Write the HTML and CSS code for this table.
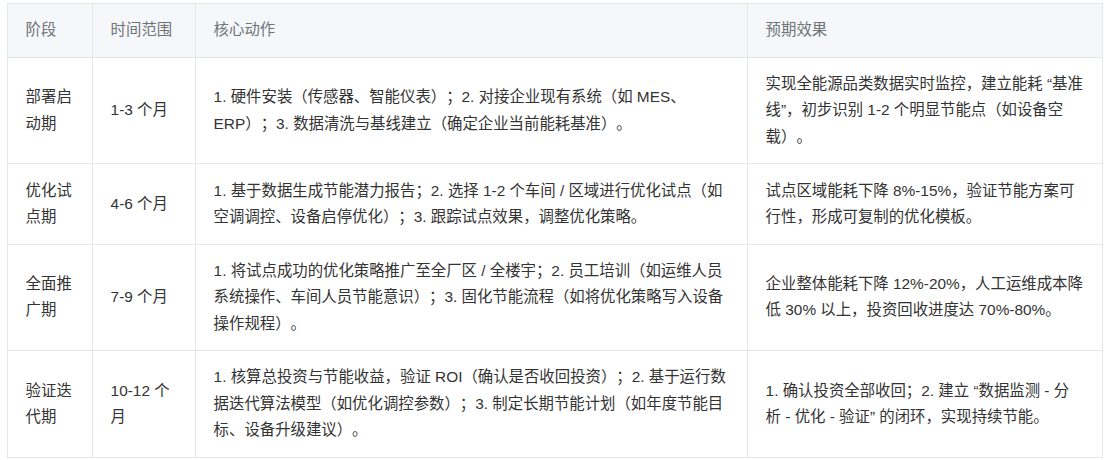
FILE: index.html
```html
<!DOCTYPE html>
<html lang="zh-CN">
<head>
<meta charset="utf-8">
<title>阶段规划</title>
<link rel="stylesheet" href="styles.css">
</head>
<body>
<div class="wrap">
<table class="plan">
<colgroup>
<col class="c1"><col class="c2"><col class="c3"><col class="c4">
</colgroup>
<thead>
<tr><th>阶段</th><th>时间范围</th><th>核心动作</th><th>预期效果</th></tr>
</thead>
<tbody>
<tr>
<td>部署启动期</td>
<td>1-3 个月</td>
<td>1. 硬件安装（传感器、智能仪表）；2. 对接企业现有系统（如 MES、ERP）；3. 数据清洗与基线建立（确定企业当前能耗基准）。</td>
<td>实现全能源品类数据实时监控，建立能耗 “基准线”，初步识别 1-2 个明显节能点（如设备空载）。</td>
</tr>
<tr>
<td>优化试点期</td>
<td>4-6 个月</td>
<td>1. 基于数据生成节能潜力报告；2. 选择 1-2 个车间 / 区域进行优化试点（如空调调控、设备启停优化）；3. 跟踪试点效果，调整优化策略。</td>
<td>试点区域能耗下降 8%-15%，验证节能方案可行性，形成可复制的优化模板。</td>
</tr>
<tr>
<td>全面推广期</td>
<td>7-9 个月</td>
<td>1. 将试点成功的优化策略推广至全厂区 / 全楼宇；2. 员工培训（如运维人员系统操作、车间人员节能意识）；3. 固化节能流程（如将优化策略写入设备操作规程）。</td>
<td>企业整体能耗下降 12%-20%，人工运维成本降低 30% 以上，投资回收进度达 70%-80%。</td>
</tr>
<tr>
<td>验证迭代期</td>
<td>10-12 个月</td>
<td>1. 核算总投资与节能收益，验证 ROI（确认是否收回投资）；2. 基于运行数据迭代算法模型（如优化调控参数）；3. 制定长期节能计划（如年度节能目标、设备升级建议）。</td>
<td>1. 确认投资全部收回；2. 建立 “数据监测 - 分析 - 优化 - 验证” 的闭环，实现持续节能。</td>
</tr>
</tbody>
</table>
</div>
</body>
</html>
```
FILE: styles.css
```css
html, body {
  margin: 0;
  padding: 0;
  background: #ffffff;
}
.wrap {
  padding: 3px 7px;
}
.plan {
  width: 1095px;
  table-layout: fixed;
  border-collapse: collapse;
  font-family: "Liberation Sans", "Noto Sans CJK SC", sans-serif;
  font-size: 15.4px;
  line-height: 26.4px;
  color: #333333;
  text-spacing-trim: space-all;
}
.c1 { width: 85px; }
.c2 { width: 103px; }
.c3 { width: 552px; }
.c4 { width: 355px; }
.plan th,
.plan td {
  border: 1px solid #e4e7ed;
  padding: 13.2px 17.6px;
  text-align: left;
  vertical-align: middle;
}
.plan th {
  background: #f5f7fa;
  font-weight: normal;
  color: #707378;
}
```
